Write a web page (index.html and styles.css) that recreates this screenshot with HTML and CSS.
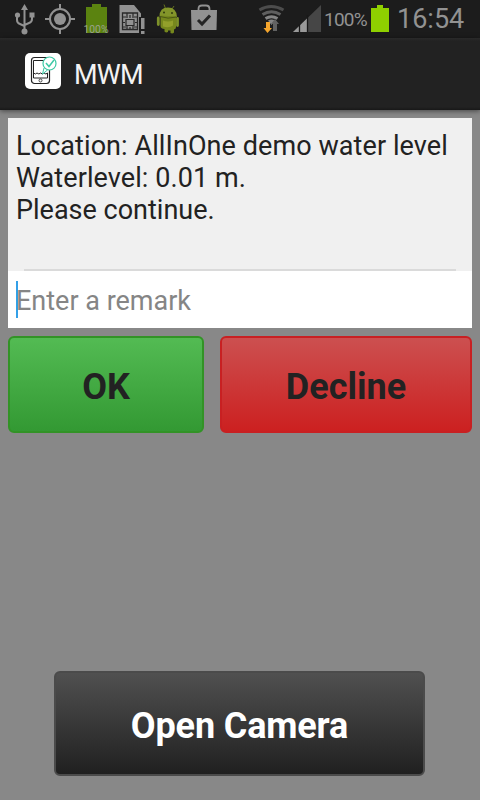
FILE: index.html
```html
<!DOCTYPE html>
<html lang="en">
<head>
    <meta charset="UTF-8">
    <meta name="viewport" content="width=device-width, initial-scale=1.0">
    <title>MWM</title>
    <link rel="stylesheet" href="styles.css">
</head>
<body>

    <!-- Status bar -->
    <div class="status-bar">
        <svg class="usb" width="24" height="38" viewBox="12 0 24 38">
            <path d="M24.500 9V31M17 16v4q0 3 3 4l4.500 2M32 16v3q0 3-3 4l-4.500 2" fill="none" stroke="#929292" stroke-width="2"/>
            <path d="M24.500 4l3.500 6h-7zM29.500 12.500h5v5h-5z" fill="#929292"/>
            <circle cx="17.500" cy="15" r="2.600" fill="#929292"/>
            <circle cx="24.500" cy="31.500" r="3" fill="#929292"/>
        </svg>
        <svg class="gps" width="36" height="38" viewBox="42 0 36 38">
            <circle cx="60" cy="19" r="10" fill="none" stroke="#929292" stroke-width="2"/>
            <circle cx="60" cy="19" r="6" fill="#929292"/>
            <path d="M60 4v6M60 28v6M45 19h6M69 19h6" stroke="#929292" stroke-width="2"/>
        </svg>
        <svg class="charge" width="30" height="38" viewBox="82 0 30 38">
            <path d="M92 4h9v3h6v26H86V7h6z" fill="#5b8310"/>
            <text x="83.500" y="32.500" textLength="25" lengthAdjust="spacingAndGlyphs">100%</text>
        </svg>
        <svg class="sim" width="30" height="38" viewBox="117 0 30 38">
            <path d="M119.500 5H134l7 8.500V17h-2v16h-19.500z" fill="#929292"/>
            <path d="M122.500 13h15v16.500h-15z" fill="none" stroke="#292929" stroke-width="1.300"/>
            <path d="M126 19.500h8v6h-8zM122 17h4M122 22.500h3M122 27h4M134 17h3M135 22.500h3M134 27h3M127 13v5M130 15v3M133 13v5M127 26v3M130 27v3M133 26v3" fill="none" stroke="#292929" stroke-width="1.200"/>
            <path d="M141 18h3.500v11H141zM141 31h3.500v3H141z" fill="#929292"/>
        </svg>
        <svg class="robot" width="28" height="38" viewBox="154 0 28 38">
            <path d="M164 4.500l1.500 4M174 6l-2 3" stroke="#66721f" stroke-width="1"/>
            <path d="M159.500 16.500q0-9 8.500-9 8.500 0 9 9.500z" fill="#83952a"/>
            <path d="M160.500 15.500l15.500 1v10.500q0 2-2 2.500v3q-1.500 1.500-3.500.500V30.500h-2.500V32q-2 1-3.500-.500V29q-4-.500-4-3z" fill="#76881d"/>
            <path d="M158.300 18v6.500M177.500 18.500v7" stroke="#7e922a" stroke-width="2.800" stroke-linecap="round"/>
            <path d="M160 16.500q8 3 16.500.500" fill="none" stroke="#4b5714"/>
            <path d="M163 20.500q5 2 10 0v5q-4 3-10 1z" fill="#92a02b"/>
            <circle cx="164" cy="12.500" r="1" fill="#323c10"/>
            <circle cx="172" cy="13" r="1" fill="#323c10"/>
        </svg>
        <svg class="bag" width="32" height="38" viewBox="188 0 32 38">
            <path d="M198.500 12V9q0-3.500 3.500-3.500h4q3.500 0 3.500 3.500v3" fill="none" stroke="#929292" stroke-width="1.800"/>
            <path d="M191 10h26l-.500 20h-25z" fill="#929292"/>
            <path d="M198 20l4 4 8-8.500" fill="none" stroke="#252525" stroke-width="3"/>
        </svg>

        <svg class="wifi" width="32" height="38" viewBox="256 0 32 38">
            <g fill="none" stroke-width="3">
                <path d="M259.500 10q11.500-7 24 0" stroke="#4c4c4c"/>
                <path d="M262.500 14.500q9-5.500 18 0" stroke="#5f5f5f"/>
                <path d="M265.500 18.500q6-3.500 12 0" stroke="#858585"/>
            </g>
            <path d="M268 20.500q3.500-2 7 0L271.500 25z" fill="#858585"/>
            <path d="M266 22h4v6h2l-4.500 5-4-5H266z" fill="#f4a52d"/>
            <path d="M273 31v-7h-2l4-5 4 5h-2v7z" fill="#626262"/>
        </svg>
        <svg class="signal" width="32" height="38" viewBox="291 0 32 38">
            <path d="M293 32l28-27v27z" fill="#464646"/>
            <path d="M293 32l14.500-14v14z" fill="#999"/>
            <path d="M299.500 24v8M307.500 15v17" stroke="#181818" stroke-width="1.300"/>
        </svg>
        <span class="percent">100%</span>
        <svg class="battery" width="22" height="38" viewBox="369 0 22 38">
            <path d="M377 5h6v3h6v24h-18V8h6z" fill="#8fd000"/>
        </svg>
        <span class="clock">16:54</span>
    </div>

    <!-- Action bar -->
    <div class="action-bar">
        <svg class="app-icon" width="36" height="36" viewBox="0 0 36 36">
            <rect width="36" height="36" rx="5" fill="#fff"/>
            <rect x="6.500" y="4.500" width="18" height="26" rx="3" fill="none" stroke="#222" stroke-width="1.200"/>
            <path d="M8.500 20V7.500H19M8.500 20q2 2 3.500 0 2 2 3.500 0 2 2 3.500 0 2 2 3.500 0M8.500 20v5h14v-5" fill="none" stroke="#222"/>
            <circle cx="15.500" cy="27.500" r="1.500" fill="none" stroke="#222" stroke-width=".8"/>
            <path d="M19 15l-1.500 6 5-4" fill="#fff" stroke="#3dc9a5"/>
            <circle cx="24.500" cy="10.500" r="6.500" fill="#fff" stroke="#3dc9a5" stroke-width="1.200"/>
            <path d="M21 10l3 3.500 5-6.500" fill="none" stroke="#3dc9a5" stroke-width="1.500"/>
        </svg>
        <h1>MWM</h1>
    </div>

    <div class="content">
        <div class="message">
            <p class="line location">Location: AllInOne demo water level</p>
            <p class="line level">Waterlevel: 0.01 m.</p>
            <p class="line">Please continue.</p>
            <div class="divider"></div>
        </div>
        <div class="remark">
            <span class="cursor"></span>
            <span class="hint">Enter a remark</span>
        </div>

        <div class="buttons">
            <button class="ok">OK</button>
            <button class="decline">Decline</button>
        </div>

        <button class="camera">Open Camera</button>
    </div>

</body>
</html>
```
FILE: styles.css
```css
* {
    box-sizing: border-box;
}

body {
    font-family: Roboto, sans-serif;
    background-color: #888;
    display: flex;
    flex-direction: column;
    margin: 0;
    height: 100vh;
    overflow: hidden;
}

.status-bar {
    display: flex;
    height: 38px;
    padding: 0 16px 0 12px;
    background-color: #1c1c1c;
    color: #929292;
    line-height: 38px;
}

.status-bar svg {
    flex: none;
}

.gps {
    margin-left: 6px;
}

.charge {
    margin-left: 4px;
}

.charge text {
    font-size: 10px;
    fill: #99a28a;
}

.sim {
    margin-left: 5px;
}

.robot {
    margin-left: 7px;
}

.bag {
    margin-left: 6px;
}

.wifi {
    margin-left: auto;
}

.signal {
    margin-left: 3px;
}

.percent {
    width: 45px;
    margin-left: 1px;
    padding-top: 1px;
    font-size: 19px;
    letter-spacing: -0.8px;
}

.clock {
    width: 67px;
    margin-left: 6px;
    font-size: 27px;
    line-height: 39px;
    text-align: right;
}

.action-bar {
    display: flex;
    align-items: center;
    height: 72px;
    padding: 0 25px;
    background: linear-gradient(#2a2a2a, #222 3px, #222 69px, #181818);
    box-shadow: 0 1px 5px rgba(0, 0, 0, 0.5);
}

.app-icon {
    margin-bottom: 6px;
}

h1 {
    margin: 2px 0 0 13px;
    color: #f3f3f3;
    font-size: 27px;
    font-weight: normal;
    letter-spacing: -0.8px;
    line-height: 32px;
}

.content {
    display: flex;
    flex: 1;
    flex-direction: column;
    padding: 8px 8px 24px;
}

.message {
    display: flex;
    flex-direction: column;
    height: 153px;
    padding: 12px 8px 0;
    background-color: #f0f0f0;
}

.line {
    margin: 0;
    color: #222;
    font-size: 27px;
    line-height: 32px;
    white-space: nowrap;
}

.location {
    letter-spacing: 0.08px;
}

.level {
    letter-spacing: 0.08px;
}

.divider {
    height: 2px;
    margin: auto 8px 0;
    background-color: #dadada;
}

.remark {
    display: flex;
    align-items: center;
    height: 57px;
    padding: 0 8px;
    background-color: #fff;
}

.cursor {
    width: 2px;
    height: 37px;
    margin-right: -2px;
    background-color: #33a0e8;
}

.hint {
    padding-top: 2px;
    color: #858585;
    font-size: 27px;
    line-height: 32px;
}

.buttons {
    display: flex;
    gap: 16px;
    margin-top: 8px;
}

button {
    border: 2px solid;
    border-radius: 6px;
    padding: 5px 0 0;
    color: #222;
    font-family: inherit;
    font-size: 36px;
    font-weight: bold;
}

.ok {
    width: 196px;
    height: 97px;
    border-color: #329326;
    background: linear-gradient(#53bb53, #339933);
}

.decline {
    flex: 1;
    height: 97px;
    border-color: #c82022;
    background: linear-gradient(#cc5050, #cc2020);
}

.camera {
    width: 371px;
    height: 105px;
    margin: auto auto 0 46px;
    border-color: #4b4b4b;
    background: linear-gradient(#505050, #202020);
    color: #fff;
    letter-spacing: -0.15px;
}
```
